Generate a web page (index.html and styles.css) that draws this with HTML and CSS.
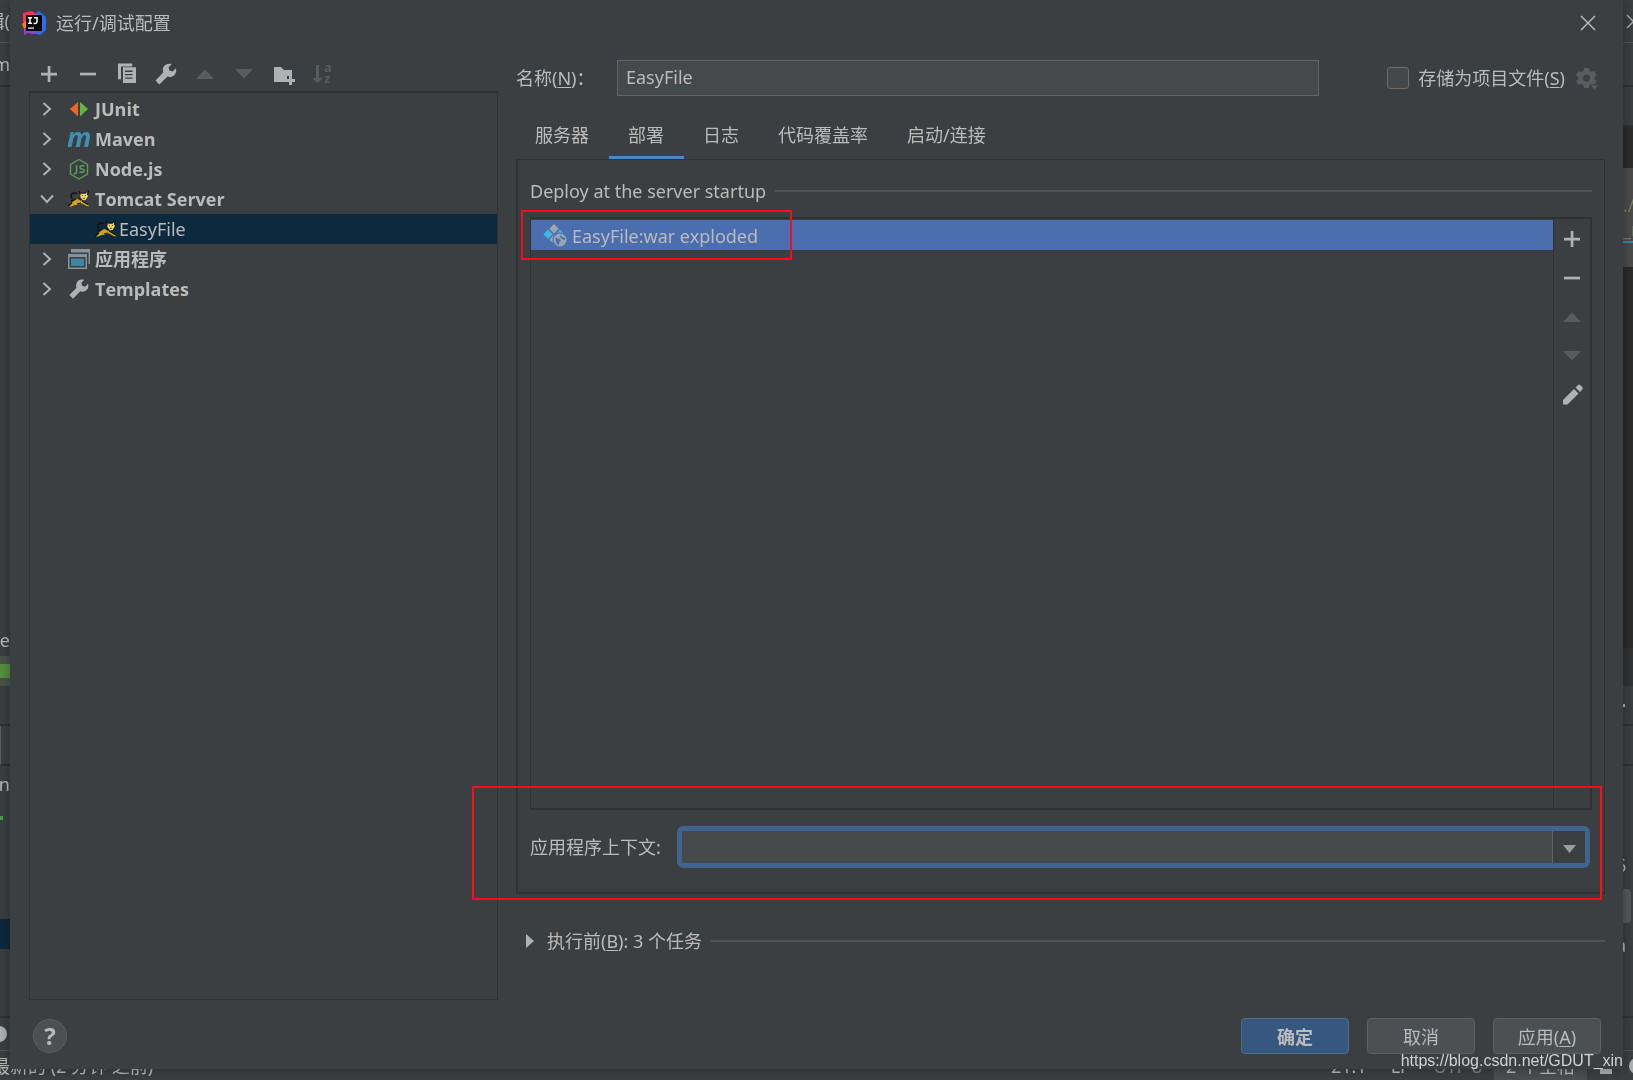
FILE: index.html
```html
<!DOCTYPE html>
<html lang="zh-CN">
<head>
<meta charset="utf-8">
<meta name="viewport" content="width=device-width, initial-scale=1">
<title>运行/调试配置</title>
<link rel="stylesheet" href="styles.css">
</head>
<body>
<svg class="sprite" aria-hidden="true">
  <symbol id="plus" viewBox="0 0 24 24"><path d="M10.700 4h2.700v6.700H20v2.700h-6.600V20h-2.700v-6.600H4v-2.700h6.700z"/></symbol>
  <symbol id="minus" viewBox="0 0 24 24"><path d="M4 10.700h16v2.700H4z"/></symbol>
  <symbol id="up" viewBox="0 0 24 24"><path d="M12 7.500l9 9.500H3z"/></symbol>
  <symbol id="down" viewBox="0 0 24 24"><path d="M12 16.500L3 7h18z"/></symbol>
  <symbol id="wrench" viewBox="0 0 16 16"><path d="M14.600 4.200L12.400 6.300 10.300 5.700 9.700 3.600 11.800 1.300C10 .8 8.100 1.200 6.900 2.500 5.800 3.800 5.600 5.500 6.200 7L1 12.400 3.600 15 9 9.700C10.500 10.300 12.200 10 13.500 8.800 14.800 7.500 15.100 5.800 14.600 4.200z"/></symbol>
  <symbol id="chevron" viewBox="0 0 16 16"><path d="M4.500 2l6.500 6-6.500 6" fill="none" stroke="#afb1b3" stroke-width="2"/></symbol>
  <symbol id="tomcat" viewBox="0 0 22 18">
    <path d="M9 3.500C4 2 1 5.500 4.500 8.500M8 9.500l-5 1.500" fill="none" stroke="#111" stroke-width="1.500"/>
    <path d="M5 11.500L9 9l5 1.500 4 2.500 3.500 3.500-3-.5-4.500-2.500-4 1-4.500 1-2 1L1 16.500z" fill="#d2a21c"/>
    <path d="M12 3l2 .6h3L19.500 2.500l.3 4L17.500 10l-2.500.3-2.500-3z" fill="#f5d36b"/>
    <path d="M11 1l1.500 3.500M20.500.500L19.500 5M13 3h5M14 11l6 3.500M0 16l4-3M11 8l2 2.500M9 14l4-1" fill="none" stroke="#111" stroke-width="1.200"/>
    <path d="M13.700 5l1.200 1M18 5l-1.200 1M15 8.300h2" stroke="#5d4713" stroke-width="1"/>
  </symbol>
</svg>

<div class="ide" aria-hidden="true">
  <div class="ide-body">
    <div class="strip left">
      <div class="seg h43 line-light"><span>编辑(</span></div>
      <div class="seg h44 line-dark"><span>m</span></div>
      <div class="seg grow"></div>
      <div class="seg h28 raised"><span>e</span></div>
      <div class="seg h30 vcs"><i></i></div>
      <div class="seg h40 line-dark"></div>
      <div class="seg h40 line-dark field"></div>
      <div class="seg h40 raised"><span>on</span></div>
      <div class="seg h113"><b></b></div>
      <div class="seg h30 picked"></div>
      <div class="seg h69 line-dark"></div>
      <div class="seg h33 line-light warn"><svg width="16" height="16" viewBox="0 0 16 16"><circle cx="8" cy="8" r="8" fill="#afb1b3"/><path d="M8 3v6M8 11v2" stroke="#3c3f41" stroke-width="2"/></svg></div>
    </div>
    <div class="strip right">
      <div class="seg h43 line-light win-close"><svg width="15" height="15" viewBox="0 0 15 15"><path d="M1 1l13 13M14 1L1 14" stroke="#afb1b3" stroke-width="1.300"/></svg></div>
      <div class="seg h44 line-dark"></div>
      <div class="seg h40 line-dark"></div>
      <div class="seg h41 editor"></div>
      <div class="seg h99 code"><span>./</span><span class="under">_m</span></div>
      <div class="seg grow editor"></div>
      <div class="seg h38 gutter"></div>
      <div class="seg h40 line-dark"><em></em></div>
      <div class="seg h40 line-dark"></div>
      <div class="seg h123"><span>6</span></div>
      <div class="seg h34 thumb"><span>:</span></div>
      <div class="seg h95 line-dark"><span>a</span></div>
      <div class="seg h33 line-light"></div>
    </div>
  </div>
  <div class="status">
    <span class="status-msg">最新的 (2 分钟 之前)</span>
    <span>21:1</span><span>LF</span><span class="dim">UTF-8</span><span class="indent">2 个空格</span>
    <svg width="34" height="24" viewBox="0 0 34 24"><path d="M1 11h12v9H1zM3 11V6h7v5" fill="#afb1b3"/><circle cx="38" cy="12" r="8" fill="#afb1b3"/></svg>
  </div>
</div>

<main class="dialog" role="dialog" aria-labelledby="dialog-title">
  <header class="titlebar">
    <svg width="24" height="24" viewBox="0 0 24 24" aria-hidden="true">
      <path d="M1 2l8-2 6 5-9 8-5-2z" fill="#fe315d"/><path d="M0 13l5-4 3 8-6 1z" fill="#f97a12"/>
      <path d="M13 3l4-3 7 6v13l-6 5-9-3z" fill="#2f6cf0"/><path d="M2 17l8 3 6 3-6 0-4-1-4 2z" fill="#9140c8"/><path d="M10 0l6 4-6 3z" fill="#f0377c"/>
      <path d="M4 4h16v16H4z" fill="#070707"/><path d="M6 16.500h6v1.200H6z" fill="#fff"/>
      <path d="M6 6.700h4M8 6.700v5.600M6 12.300h4M12 6.700h3v4q0 1.700-1.700 1.700H11.500" fill="none" stroke="#fff" stroke-width="1.500"/>
    </svg>
    <h1 id="dialog-title">运行/调试配置</h1>
    <button class="icon-btn close" aria-label="关闭"><svg width="16" height="16" viewBox="0 0 16 16"><path d="M1 1l14 14M15 1L1 15" stroke="#c0c2c3" stroke-width="1.400"/></svg></button>
  </header>

  <div class="content">
    <section class="sidebar">
      <div class="toolbar">
        <button class="icon-btn" aria-label="添加"><svg><use href="#plus"/></svg></button>
        <button class="icon-btn" aria-label="移除"><svg><use href="#minus"/></svg></button>
        <button class="icon-btn" aria-label="复制"><svg viewBox="0 0 16 16"><path d="M2 1h9.500v2H4v8.500H2z"/><path fill-rule="evenodd" d="M5.300 3.500H14V14H5.300zM6.700 5.700v.9h5v-.9zM6.700 8v.9h5V8zM6.700 10.300v.9h5v-.9z"/></svg></button>
        <button class="icon-btn" aria-label="编辑模板"><svg><use href="#wrench"/></svg></button>
        <button class="icon-btn off" aria-label="上移" disabled><svg><use href="#up"/></svg></button>
        <button class="icon-btn off" aria-label="下移" disabled><svg><use href="#down"/></svg></button>
        <button class="icon-btn" aria-label="新建文件夹"><svg viewBox="0 0 24 24"><path d="M3 5h7l3 3h8v6h-5v6H3z"/><path d="M18 14h3v3h3v3h-3v3h-3v-3h-3v-3h3z"/></svg></button>
        <button class="icon-btn off" aria-label="排序" disabled><svg viewBox="0 0 24 24"><path d="M6 3h3v13h4l-5.500 5L2 16h4z"/><text x="14" y="10" class="az">a</text><text x="14" y="21" class="az">z</text></svg></button>
      </div>
      <ul class="tree" role="tree">
        <li role="treeitem"><svg class="arrow"><use href="#chevron"/></svg><svg class="kind" viewBox="0 0 22 22"><path d="M10 4v14.500L2 11z" fill="#f26522"/><path d="M12 4v14.500L20 11z" fill="#62b543"/></svg>JUnit</li>
        <li role="treeitem"><svg class="arrow"><use href="#chevron"/></svg><svg class="kind" viewBox="0 0 22 22"><text x="-1" y="19" class="mvn">m</text></svg>Maven</li>
        <li role="treeitem"><svg class="arrow"><use href="#chevron"/></svg><svg class="kind" viewBox="0 0 22 22"><path d="M11 1.500l8.500 5v9.500L11 21l-8.500-5V6.500z" fill="none" stroke="#5c9a58" stroke-width="1.400"/><path d="M8.500 7v7q0 2-3 1.700M16.500 7.800h-2.500q-2 0-2 1.500t2 1.600 2.200 1.600-2 1.700H11.500" fill="none" stroke="#5c9a58" stroke-width="1.500"/></svg>Node.js</li>
        <li role="treeitem"><svg class="arrow open"><use href="#chevron"/></svg><svg class="kind"><use href="#tomcat"/></svg>Tomcat Server</li>
        <li role="treeitem" class="child" aria-selected="true"><svg class="kind"><use href="#tomcat"/></svg>EasyFile</li>
        <li role="treeitem"><svg class="arrow"><use href="#chevron"/></svg><svg class="kind" viewBox="0 0 22 22"><path d="M3 1h19v15h-1.500V4.500H3z" fill="#87939a"/><path d="M0 6h19v15H0zM1.500 9v10.500h16V9z" fill="#87939a" fill-rule="evenodd"/><path d="M3 10.500h13V18H3z" fill="#3f86a3"/></svg>应用程序</li>
        <li role="treeitem"><svg class="arrow"><use href="#chevron"/></svg><svg class="kind tool"><use href="#wrench"/></svg>Templates</li>
      </ul>
    </section>

    <section class="settings">
      <div class="name-row">
        <label for="name">名称(<u>N</u>)：</label>
        <input id="name" class="text" type="text" value="EasyFile">
        <div class="store">
          <input id="store" type="checkbox"><label for="store">存储为项目文件(<u>S</u>)</label>
          <button class="icon-btn off" aria-label="存储选项" disabled><svg viewBox="0 0 24 24"><path fill-rule="evenodd" d="M9 2h5l.6 3 2 1 2.900-1 2.300 4-2.200 2v2l2 2-2.200 4-2.800-1-2 1.200-.6 2.800H9l-.7-3-2-1-2.800 1-2.500-4 2.300-2v-2L1 9l2.500-4 2.800 1 2-1zM11.500 8.500a3.500 3.500 0 100 7 3.500 3.500 0 000-7z"/><path d="M15 19h9l-4.500 5z" stroke="#3c3f41" stroke-width=".8"/></svg></button>
        </div>
      </div>

      <div class="tabs" role="tablist">
        <button role="tab">服务器</button><button role="tab" aria-selected="true">部署</button><button role="tab">日志</button><button role="tab">代码覆盖率</button><button role="tab">启动/连接</button>
      </div>

      <div class="panel" role="tabpanel">
        <h2 class="ruled">Deploy at the server startup</h2>
        <div class="deploy">
          <ul class="artifacts">
            <li><svg width="24" height="24" viewBox="0 0 24 24" aria-hidden="true"><path d="M11 1l4.700 4.700L11 10.400 6.300 5.700z" fill="#9aa7b0"/><path d="M5 6.500l4.700 4.700L5 16 .3 11.200z" fill="#40b6e0"/><path d="M17 6.500l3.500 3.500q-4-1-7 .5z" fill="#40b6e0"/><path d="M9.500 13l2-1.500q-3 4-1.500 8.500L6.500 17z" fill="#9aa7b0"/><circle cx="17" cy="17" r="6.500" fill="#9aa7b0"/><path d="M12.500 14.500l4 1.500 1.500 2-2 1.500v3q-4-2-3.500-8zM17 11.500l2 2.500 3 1v2l-3-1-2-2z" fill="#4b6eaf"/></svg><span>EasyFile:war exploded</span></li>
          </ul>
          <div class="side-tools">
            <button class="icon-btn" aria-label="添加"><svg><use href="#plus"/></svg></button>
            <button class="icon-btn" aria-label="移除"><svg><use href="#minus"/></svg></button>
            <button class="icon-btn off" aria-label="上移" disabled><svg><use href="#up"/></svg></button>
            <button class="icon-btn off" aria-label="下移" disabled><svg><use href="#down"/></svg></button>
            <button class="icon-btn" aria-label="编辑"><svg viewBox="0 0 24 24"><path d="M14 6l4.500 4.500L7.500 21.500H3V17z"/><path d="M15.500 4.500L18 2q1-1 2.200 0L22.300 4.300q1 1 0 2.200L20 9z"/></svg></button>
          </div>
          <div class="mark mark-artifact"></div>
        </div>
        <div class="context-row">
          <label for="context">应用程序上下文:</label>
          <div class="combo"><input id="context" type="text"><button aria-label="展开"><svg width="13" height="8" viewBox="0 0 13 8"><path d="M0 0h13L6.500 8z" fill="#9b9ea0"/></svg></button></div>
        </div>
        <div class="mark mark-context"></div>
      </div>

      <h2 class="ruled before"><svg width="8" height="14" viewBox="0 0 8 14" aria-hidden="true"><path d="M0 0l8 7-8 7z" fill="#afb1b3"/></svg><span>执行前(<u>B</u>): 3 个任务</span></h2>
    </section>
  </div>

  <footer class="actions">
    <button class="help" aria-label="帮助">?</button>
    <button class="btn primary">确定</button>
    <button class="btn">取消</button>
    <button class="btn">应用(<u>A</u>)</button>
  </footer>
  <span class="watermark">https://blog.csdn.net/GDUT_xin</span>
</main>
</body>
</html>
```
FILE: styles.css
```css
* { box-sizing: border-box; }

body {
  margin: 0;
  background: #3c3f41;
  color: #bbbbbb;
  font: 18px/24px "Noto Sans", "Noto Sans CJK SC", sans-serif;
}

h1, h2, ul { margin: 0; padding: 0; font-size: 18px; font-weight: 400; }
ul { list-style: none; }
button, input { font: inherit; color: inherit; }
u { text-underline-offset: 2px; }
.sprite { display: none; }

/* IDE window behind the dialog */
.ide {
  position: fixed;
  inset: 0;
  display: flex;
  flex-direction: column;
  overflow: hidden;
}
.ide-body { flex: 1; display: flex; justify-content: space-between; min-height: 0; }
.strip { display: flex; flex-direction: column; width: 10px; }
.seg {
  display: flex;
  flex-shrink: 0;
  align-items: center;
  overflow: hidden;
  border: 0 solid #2f3132;
}
.seg svg { flex-shrink: 0; }
.left .seg { justify-content: flex-end; white-space: nowrap; }
.seg.grow { flex: 1; }
.seg.raised { padding-bottom: 4px; }
.warn { padding-right: 3px; }
.win-close { padding-left: 3px; }
.line-light { border-color: #515354; border-bottom-width: 1px; }
.line-dark { border-bottom-width: 2px; }
.h28 { height: 28px; } .h30 { height: 30px; } .h33 { height: 33px; }
.h34 { height: 34px; } .h38 { height: 38px; } .h40 { height: 40px; }
.h41 { height: 41px; } .h43 { height: 43px; } .h44 { height: 44px; }
.h69 { height: 69px; } .h95 { height: 95px; } .h99 { height: 99px; }
.h113 { height: 113px; } .h123 { height: 123px; }
.vcs { background: #49544a; }
.vcs i { width: 10px; height: 14px; background: #57913f; }
.h113 b { width: 10px; height: 4px; margin-bottom: 90px; background: linear-gradient(90deg, #499c54 3px, transparent 3px); }
.field { border-left: 1px solid #5e6060; }
.picked { background: #0d293e; }
.editor { background: #2b2b2b; }
.gutter { background: #313335; }
.seg.code { flex-direction: column; align-items: flex-start; justify-content: center; background: #4b4b4b; color: #6a8759; }
.under { border-bottom: 2px solid #3a87ad; }
.seg em { width: 2px; height: 3px; background: #afb1b3; }
.seg.h123 { align-items: flex-end; padding-bottom: 12px; }
.right .h123 span, .right .thumb span, .right .h95 span { margin-left: -7px; }
.thumb { background: #56595b; border-radius: 0 4px 4px 0; margin-right: 2px; }
.right .h95 { align-items: flex-start; padding-top: 10px; }
.status {
  display: flex;
  align-items: center;
  gap: 24px;
  height: 29px;
}
.status-msg { margin-right: auto; margin-left: -8px; }
.dim { color: #858788; }
.indent { margin: 0 -12px; padding: 3px 12px; background: #4c5052; }

/* Dialog */
.dialog {
  position: relative;
  display: flex;
  flex-direction: column;
  min-height: calc(100vh - 11px);
  margin: 0 10px 11px;
  background: #3c3f41;
  box-shadow: 0 0 12px rgba(0, 0, 0, .35);
}
.titlebar { display: flex; align-items: center; gap: 10px; height: 46px; padding: 0 23px 0 12px; }
.close { margin-left: auto; }
.icon-btn {
  display: flex;
  align-items: center;
  justify-content: center;
  flex-shrink: 0;
  width: 24px;
  height: 24px;
  padding: 0;
  border: 0;
  background: none;
  fill: #afb1b3;
}
.icon-btn.off { fill: #5a5b5c; }
.toolbar svg, .side-tools svg, .store svg { width: 24px; height: 24px; }
.az { font-size: 13px; font-weight: 700; }

.content { flex: 1; display: flex; gap: 18px; padding: 0 18px 0 19px; }
.sidebar { display: flex; flex-direction: column; flex: 0 0 469px; }
.toolbar { display: flex; align-items: center; gap: 15px; height: 45px; padding: 11px 8px 0; }
.tree { flex: 1; border: 1px solid #2f3132; border-top-width: 2px; }
.tree li {
  display: flex;
  align-items: center;
  height: 30px;
  padding-left: 9px;
  font-family: "Open Sans", "Noto Sans CJK SC", sans-serif;
  font-weight: 700;
}
.tree li:first-child { margin-top: 1px; }
.arrow { width: 16px; height: 16px; margin-right: 13px; }
.arrow.open { transform: rotate(90deg); }
.kind { width: 22px; height: 22px; margin-right: 5px; }
.tool { fill: #afb1b3; }
.mvn { font-size: 27px; font-style: italic; font-weight: 700; fill: #3e90b2; }
.tree .child { padding-left: 65px; background: #0d293e; font-family: inherit; font-weight: 400; }
.child .kind { margin-right: 2px; }

.settings { flex: 1; display: flex; flex-direction: column; min-width: 0; }
.name-row { display: flex; align-items: center; padding: 14px 6px 0 0; }
.name-row > label { width: 101px; }
.text { flex: 1; min-width: 0; height: 36px; padding: 0 8px 2px; border: 1px solid #646464; background: #45494a; }
.store { display: flex; align-items: center; margin-left: 68px; }
.store input {
  appearance: none;
  width: 22px;
  height: 22px;
  margin: 0 9px 0 0;
  border: 1px solid #6b6b6b;
  border-radius: 3px;
  background: #43494a;
}
.store .icon-btn { margin-left: 10px; }

.tabs { display: flex; height: 63px; }
.tabs button {
  height: 64px;
  padding: 17px 20px 0 19px;
  border: 0;
  border-bottom: 4px solid transparent;
  background: none;
}
.tabs [aria-selected] { border-bottom-color: #4a88c7; }

.panel {
  position: relative;
  flex: 1;
  display: flex;
  flex-direction: column;
  padding: 19px 12px 24px;
  border: 1px solid #2f3132;
  border-width: 1px 1px 2px 2px;
}
.ruled { display: flex; align-items: center; gap: 9px; }
.ruled::after { content: ""; flex: 1; height: 2px; background: #515354; }
.deploy {
  position: relative;
  flex: 1;
  display: flex;
  margin-top: 14px;
  border: 2px solid #2f3132;
  border-left-width: 1px;
}
.artifacts { flex: 1; padding-top: 1px; }
.artifacts li { display: flex; align-items: center; gap: 5px; height: 30px; padding-left: 12px; background: #4b6eaf; }
.artifacts span { padding-top: 2px; }
.side-tools { display: flex; flex-direction: column; align-items: center; gap: 15px; width: 37px; padding-top: 8px; border-left: 1px solid #2f3132; }
.context-row { display: flex; align-items: center; gap: 16px; margin: 16px 2px 0 0; }
.combo {
  flex: 1;
  display: flex;
  height: 42px;
  border: 5px solid #3f658e;
  border-radius: 6px;
  background: #45494a;
}
.combo input { flex: 1; min-width: 0; padding: 0 6px; border: 0; background: none; outline: 0; }
.combo button { width: 33px; padding: 0; border: 0; border-left: 1px solid #646464; background: #3c3f41; line-height: 1; }
.combo svg { vertical-align: middle; }

/* Red review rectangles */
.mark { position: absolute; border: 2px solid #ed121b; pointer-events: none; }
.mark-artifact { top: -9px; left: -10px; width: 271px; height: 50px; }
.mark-context { left: -46px; right: 2px; bottom: -8px; height: 114px; }

.before { height: 24px; margin: 35px 0 47px; padding-left: 10px; }
.before svg { margin-right: 4px; }

.actions { display: flex; align-items: center; gap: 18px; height: 69px; padding: 2px 22px 0 23px; }
.help {
  width: 34px;
  height: 34px;
  margin-right: auto;
  padding: 0;
  border: 1px solid #5e6060;
  border-radius: 50%;
  background: #4c5052;
  font-size: 24px;
  font-weight: 700;
  line-height: 30px;
}
.btn { width: 108px; height: 36px; padding: 2px 0 0; border: 1px solid #5e6060; border-radius: 4px; background: #4c5052; }
.primary { border-color: #4c708c; background: #365880; font-weight: 700; }
.watermark {
  position: absolute;
  right: 0;
  bottom: 0;
  color: #d0d0d0;
  font: 16px/16px "Liberation Sans", sans-serif;
}
```
